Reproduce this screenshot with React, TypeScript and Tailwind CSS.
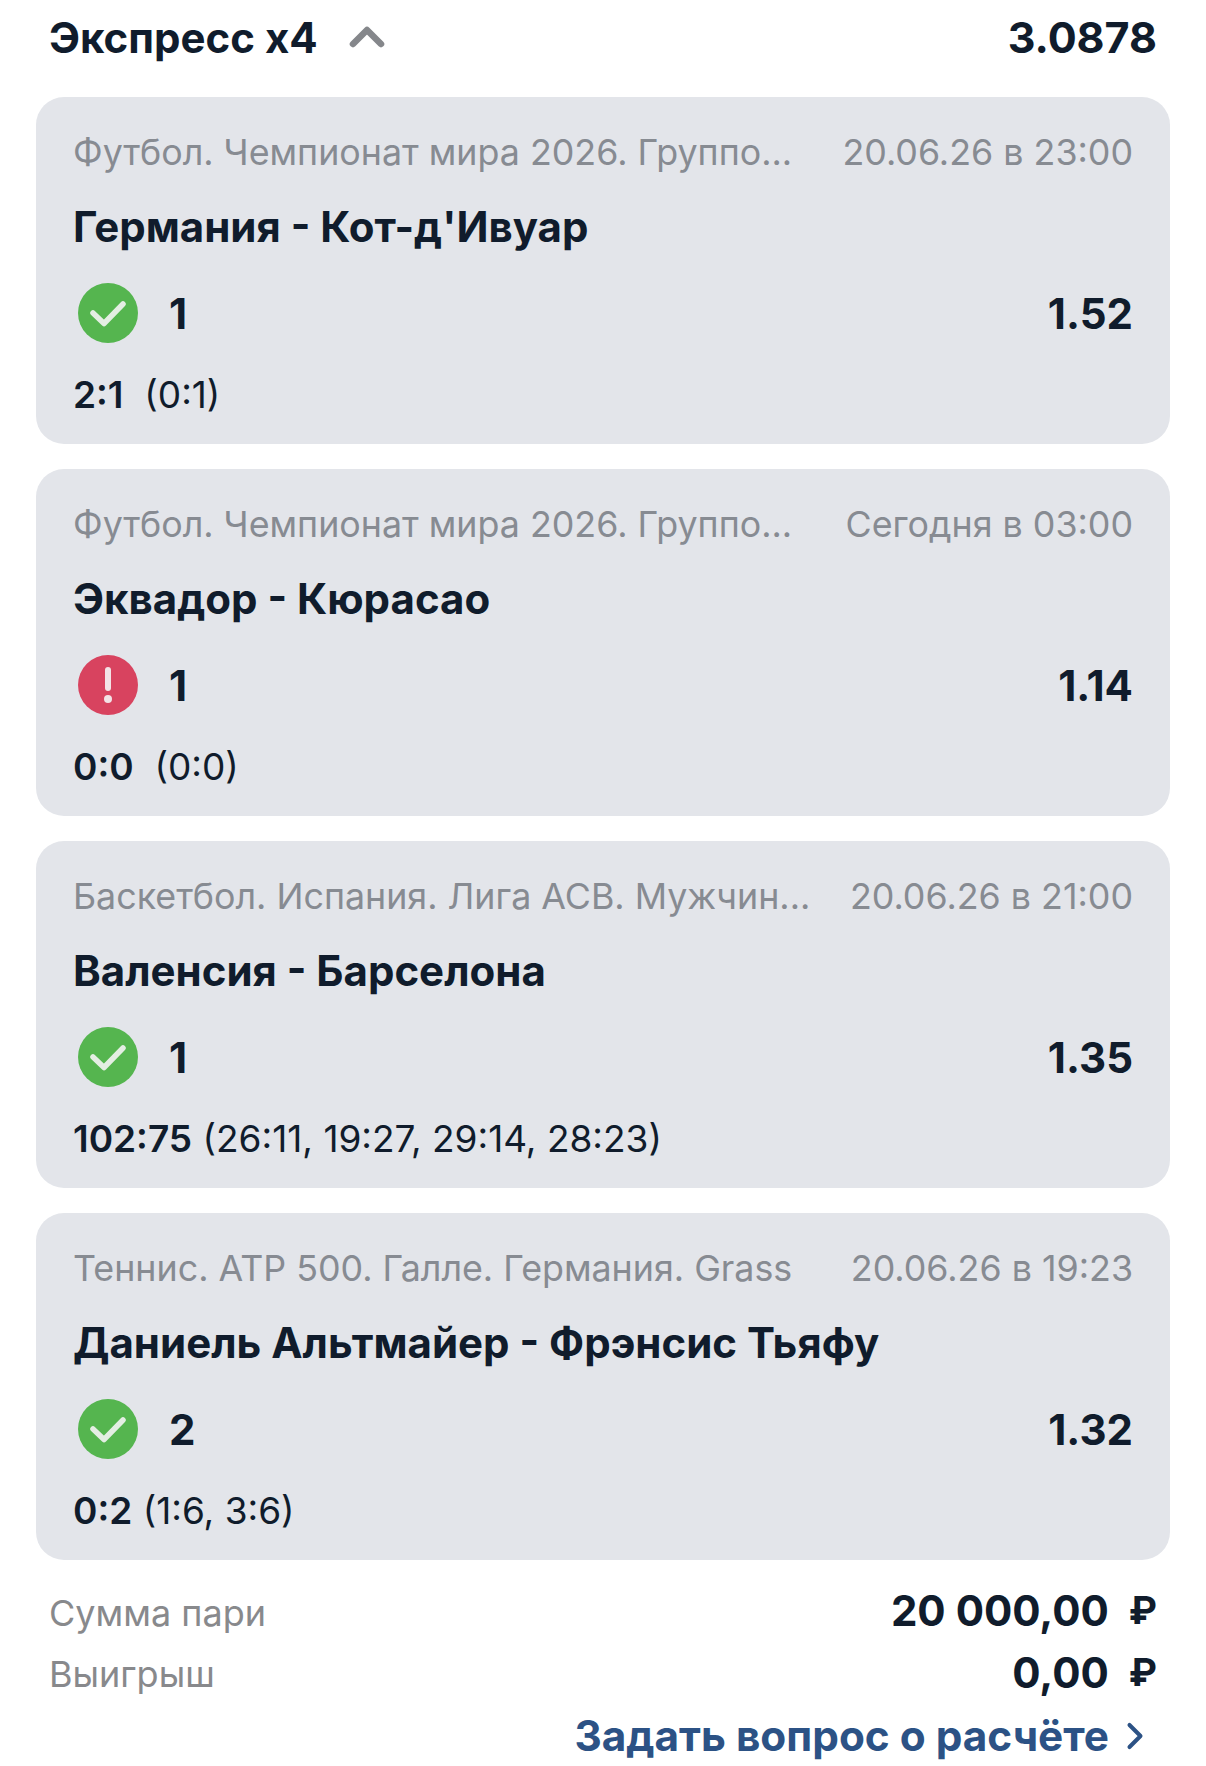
import React from 'react';
import { ChevronUp, ChevronRight } from 'lucide-react';

interface Bet {
    league: string;
    date: string;
    teams: string;
    status: 'won' | 'lost';
    pick: string;
    odds: string;
    score: string;
    periods: string;
}

const bets: Bet[] = [
    { league: 'Футбол. Чемпионат мира 2026. Группо...', date: '20.06.26 в 23:00', teams: "Германия - Кот-д'Ивуар", status: 'won', pick: '1', odds: '1.52', score: '2:1', periods: ' (0:1)' },
    { league: 'Футбол. Чемпионат мира 2026. Группо...', date: 'Сегодня в 03:00', teams: 'Эквадор - Кюрасао', status: 'lost', pick: '1', odds: '1.14', score: '0:0', periods: ' (0:0)' },
    { league: 'Баскетбол. Испания. Лига ACB. Мужчин...', date: '20.06.26 в 21:00', teams: 'Валенсия - Барселона', status: 'won', pick: '1', odds: '1.35', score: '102:75', periods: '(26:11, 19:27, 29:14, 28:23)' },
    { league: 'Теннис. ATP 500. Галле. Германия. Grass', date: '20.06.26 в 19:23', teams: 'Даниель Альтмайер - Фрэнсис Тьяфу', status: 'won', pick: '2', odds: '1.32', score: '0:2', periods: '(1:6, 3:6)' },
];

const StatusIcon = ({ status }: { status: Bet['status'] }) => {
    if (status === 'won') {
        return (
            <svg width="60" height="60" viewBox="0 0 60 60" className="shrink-0">
                <circle cx="30" cy="30" r="30" fill="#55b54f" />
                <path d="M15 30 L26 40.5 L45 21" fill="none" stroke="#e4eee3" strokeWidth="5.5" strokeLinecap="round" strokeLinejoin="round" />
            </svg>
        );
    }
    return (
        <svg width="60" height="60" viewBox="0 0 60 60" className="shrink-0">
            <circle cx="30" cy="30" r="30" fill="#d8435f" />
            <path d="M30 15 L30 33" fill="none" stroke="#f3e3e6" strokeWidth="6" strokeLinecap="round" />
            <circle cx="30" cy="44" r="4" fill="#f3e3e6" />
        </svg>
    );
};

const BetCard = ({ bet }: { bet: Bet }) => (
    <div className="h-[347px] rounded-[28px] bg-[#e3e5ea] px-[37px] pt-[34px]">
        <div className="flex items-center justify-between h-[42px] text-[35.8px] leading-[42px] text-[#878b92] whitespace-nowrap">
            <span>{bet.league}</span>
            <span>{bet.date}</span>
        </div>
        <div className="mt-[33px] h-[42px] text-[42px] leading-[42px] font-bold text-[#101c2c]">{bet.teams}</div>
        <div className="mt-[35px] flex items-center justify-between h-[60px] pl-[5px]">
            <div className="flex items-center gap-[31px]">
                <StatusIcon status={bet.status} />
                <span className="text-[42px] font-bold text-[#101c2c]">{bet.pick}</span>
            </div>
            <span className="text-[42px] font-bold text-[#101c2c]">{bet.odds}</span>
        </div>
        <div className="mt-[30px] text-[37px] leading-[44px] text-[#101c2c] whitespace-pre">
            <span className="font-semibold">{bet.score}</span> {bet.periods}
        </div>
    </div>
);

export default function App() {
    return (
        <div className="w-[1206px] h-[1766px] overflow-hidden bg-white font-['Inter',sans-serif]">
            <div className="flex items-center justify-between h-[74px] pl-[49px] pr-[13px] mr-[36px] text-[#101c2c]">
                <div className="flex items-center gap-[21px]">
                    <span className="text-[42px] font-bold">Экспресс x4</span>
                    <ChevronUp size={56} strokeWidth={2.8} className="text-[#85878b]" />
                </div>
                <span className="text-[43px] font-bold">3.0878</span>
            </div>
            <div className="mt-[23px] mx-[36px] flex flex-col gap-[25px]">
                {bets.map((bet) => <BetCard key={bet.date} bet={bet} />)}
            </div>
            <div className="mt-[19px] pl-[49px] pr-[13px] mr-[36px]">
                <div className="flex items-center justify-between h-[62px]">
                    <span className="pt-[6px] text-[36px] text-[#88898c]">Сумма пари</span>
                    <div className="flex items-center gap-[20px] text-[#101c2c] font-bold">
                        <span className="text-[42px]">20 000,00</span>
                        <span className="text-[38px]">₽</span>
                    </div>
                </div>
                <div className="flex items-center justify-between h-[62px]">
                    <span className="pt-[4px] text-[36px] text-[#88898c]">Выигрыш</span>
                    <div className="flex items-center gap-[20px] text-[#101c2c] font-bold">
                        <span className="text-[42px]">0,00</span>
                        <span className="text-[38px]">₽</span>
                    </div>
                </div>
                <div className="flex items-center justify-end h-[64px] pt-[2px] text-[#2c5285]">
                    <span className="text-[42.3px] font-bold">Задать вопрос о расчёте</span>
                    <ChevronRight size={44} strokeWidth={2.2} className="ml-[4px]" />
                </div>
            </div>
        </div>
    );
}
